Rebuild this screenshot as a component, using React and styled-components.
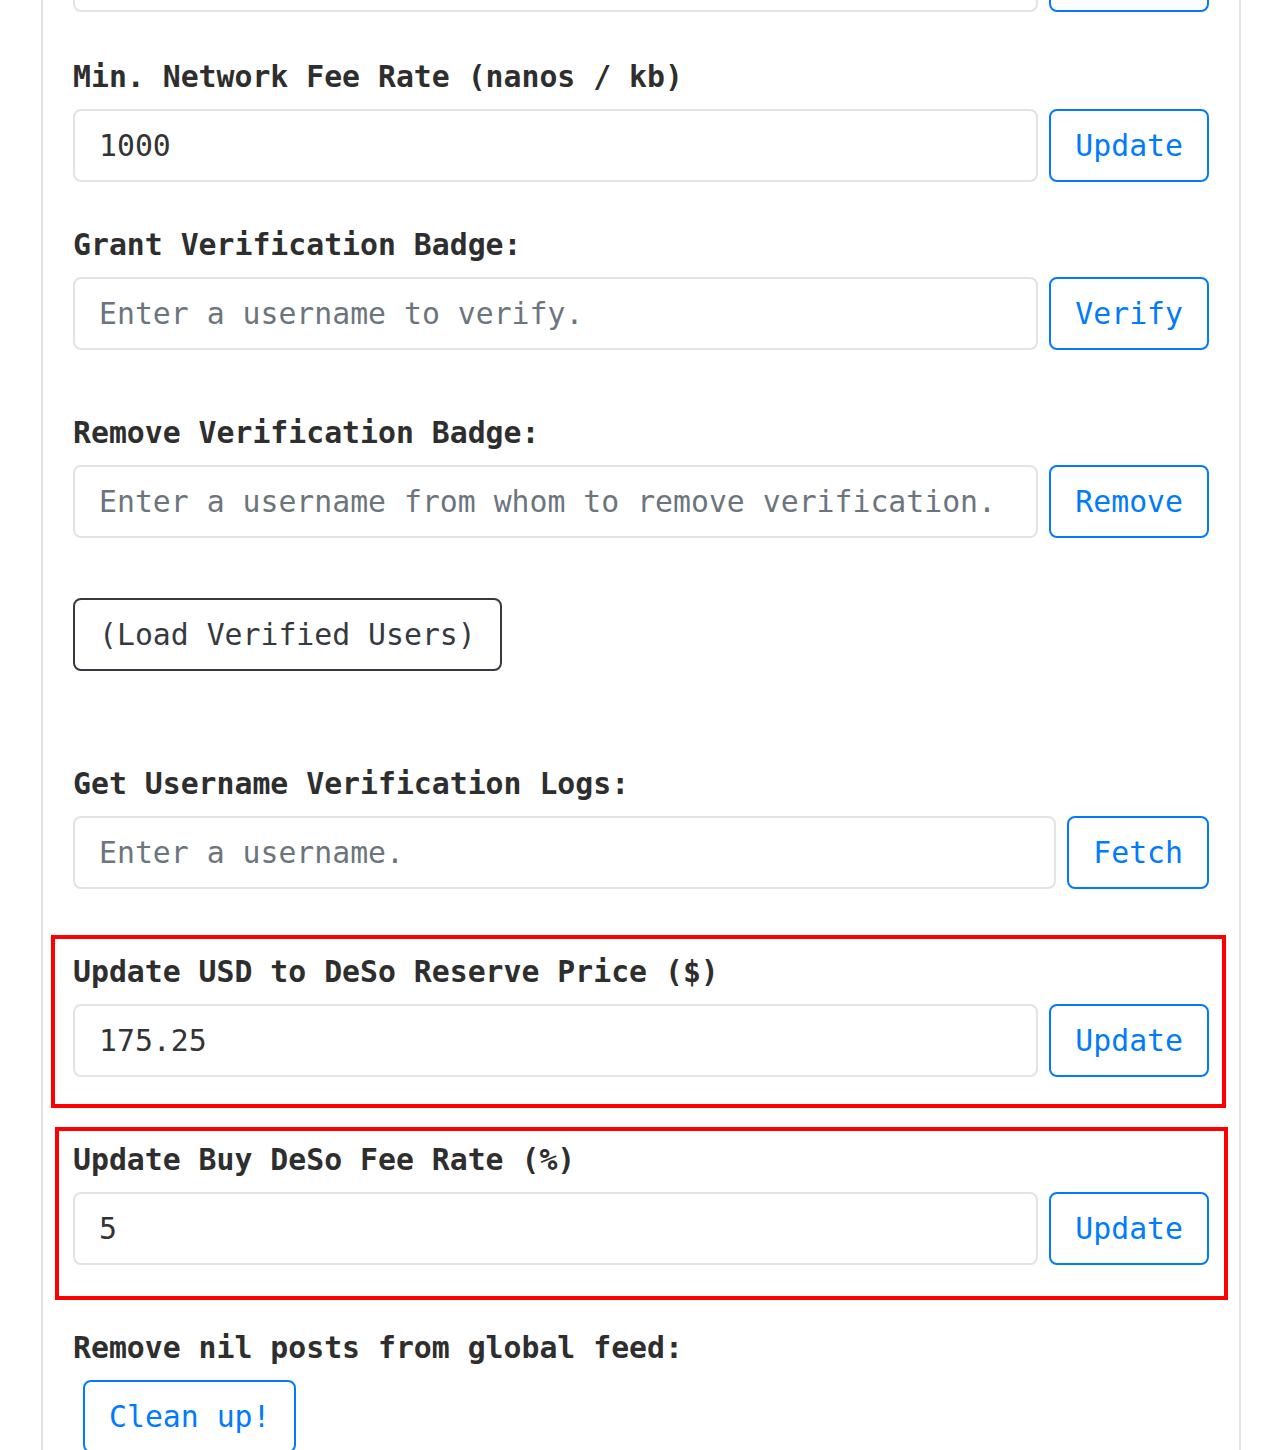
import React from "react";
import styled, { createGlobalStyle } from "styled-components";

const Global = createGlobalStyle`
  html, body { margin: 0; padding: 0; background: #fff; }
  body { font-family: "DejaVu Sans Mono", "Liberation Mono", monospace; color: #333; overflow: hidden; }
  * { box-sizing: border-box; }
`;

const Panel = styled.div`
  margin-left: 41px;
  width: 1200px;
  min-height: 1450px;
  border-left: 2px solid #e4e4e4;
  border-right: 2px solid #e4e4e4;
  padding: 0 30px 0 30px;
`;

const Section = styled.section`
  position: relative;
  margin-top: ${(p) => p.$top}px;
`;

const Label = styled.div`
  font-size: 29.8px;
  font-weight: 700;
  line-height: 45px;
  color: #2e2e2e;
  margin-bottom: 10px;
  white-space: pre;
`;

const Row = styled.div`
  display: flex;
  gap: 11px;
  height: 73px;
  margin-top: ${(p) => p.$top || 0}px;
`;

const Input = styled.input`
  flex: 1;
  min-width: 0;
  height: 73px;
  border: 2px solid #e3e3e3;
  border-radius: 8px;
  padding: 0 24px;
  font-family: "DejaVu Sans Mono", "Liberation Mono", monospace;
  font-size: 29.8px;
  color: #333;
  background: #fff;
  outline: none;
  &::placeholder { color: #6c757d; opacity: 1; }
`;

const Button = styled.button`
  flex: none;
  height: 73px;
  width: ${(p) => (p.$width ? `${p.$width}px` : "auto")};
  padding: 0 24px;
  margin-left: ${(p) => p.$indent || 0}px;
  border: 2px solid ${(p) => (p.$dark ? "#343a40" : "#007bff")};
  border-radius: 8px;
  background: #fff;
  color: ${(p) => (p.$dark ? "#343a40" : "#007bff")};
  font-family: "DejaVu Sans Mono", "Liberation Mono", monospace;
  font-size: 29.8px;
  white-space: pre;
  cursor: pointer;
`;

const Highlight = styled.div`
  position: absolute;
  top: ${(p) => p.$t}px;
  left: ${(p) => p.$l}px;
  right: ${(p) => p.$r}px;
  bottom: ${(p) => p.$b}px;
  border: 4px solid #f00;
  pointer-events: none;
`;

function Field({ top, label, value, placeholder, action, children }) {
  return (
    <Section $top={top}>
      <Label>{label}</Label>
      <Row>
        <Input defaultValue={value} placeholder={placeholder} />
        <Button>{action}</Button>
      </Row>
      {children}
    </Section>
  );
}

export default function App() {
  return (
    <>
      <Global />
      <Panel>
        <Row $top={-61}>
          <Input aria-label="previous setting" />
          <Button $width={160} aria-label="Update" />
        </Row>
        <Field top={42} label="Min. Network Fee Rate (nanos / kb)" value="1000" action="Update" />
        <Field top={40} label="Grant Verification Badge:" placeholder="Enter a username to verify." action="Verify" />
        <Field
          top={60}
          label="Remove Verification Badge:"
          placeholder="Enter a username from whom to remove verification."
          action="Remove"
        />
        <Row $top={60}>
          <Button $dark>(Load Verified Users)</Button>
        </Row>
        <Field top={90} label="Get Username Verification Logs:" placeholder="Enter a username." action="Fetch" />
        <Field top={60} label="Update USD to DeSo Reserve Price ($)" value="175.25" action="Update">
          <Highlight $t={-14} $l={-22} $r={-17} $b={-31} />
        </Field>
        <Field top={60} label="Update Buy DeSo Fee Rate (%)" value="5" action="Update">
          <Highlight $t={-10} $l={-18} $r={-19} $b={-35} />
        </Field>
        <Section $top={60}>
          <Label>Remove nil posts from global feed:</Label>
          <Row>
            <Button $indent={10}>Clean up!</Button>
          </Row>
        </Section>
      </Panel>
    </>
  );
}
